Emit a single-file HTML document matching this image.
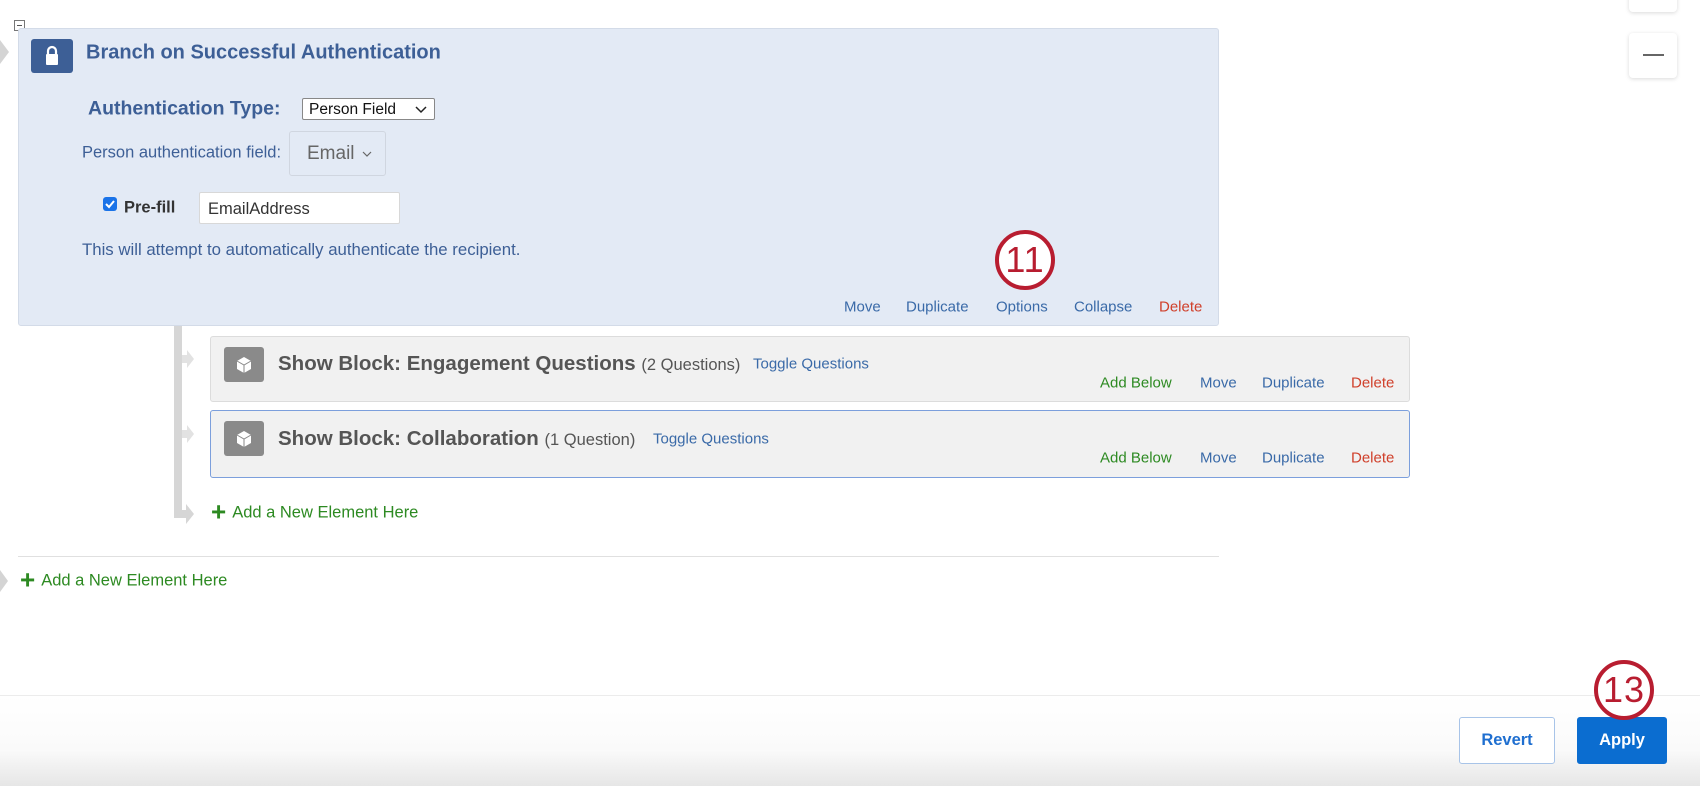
<!DOCTYPE html>
<html><head><meta charset="utf-8"><style>
*{box-sizing:border-box;margin:0;padding:0}
body{width:1700px;height:786px;background:#fff;font-family:"Liberation Sans",Arial,sans-serif;position:relative;overflow:hidden}
.a{position:absolute;white-space:nowrap}
.blue{color:#3a6aa8}
.red{color:#d0402b}
.green{color:#2d8a22}
.lk{font-size:15px;transform:translateY(-50%)}
.mid{transform:translateY(-50%)}
.blk{position:absolute;left:210px;width:1200px;background:#f1f1f1;border:1px solid #dcdcdc;border-radius:3px}
.ic{position:absolute;left:13px;top:10px;width:40px;height:35px;background:#8a8a8a;border-radius:3px}
.circ{position:absolute;width:60px;height:60px;border:4px solid #b81d30;border-radius:50%;background:#fff;color:#b81d30;font-size:36px;text-align:center;line-height:52px;letter-spacing:1px}
</style></head><body>
<div class="a" style="left:14px;top:20px;width:11px;height:11px;border:1px solid #777;background:#fff"><div style="position:absolute;left:2px;top:4px;width:5px;height:1px;background:#555"></div></div>
<div class="a" style="left:0;top:40px;width:0;height:0;border-top:12px solid transparent;border-bottom:12px solid transparent;border-left:9px solid #d4d4d4"></div>
<div class="a" style="left:18px;top:28px;width:1201px;height:298px;background:#e3eaf5;border:1px solid #d3dbe8;border-radius:3px"></div>
<div class="a" style="left:31px;top:39px;width:42px;height:34px;background:#3d5f96;border-radius:3px">
<svg width="42" height="34" viewBox="0 0 42 34"><path d="M17 16v-4a4 4 0 0 1 8 0v4" fill="none" stroke="#fff" stroke-width="2.2"/><rect x="15" y="15" width="12" height="11" rx="1" fill="#fff"/></svg></div>
<div class="a mid" style="left:86px;top:53px;font-size:20px;font-weight:bold;color:#3d5f96">Branch on Successful Authentication</div>
<div class="a mid" style="left:88px;top:109px;font-size:19.5px;font-weight:bold;color:#3d5f96">Authentication Type:</div>
<div class="a" style="left:302px;top:98px;width:133px;height:22px;background:#fff;border:1px solid #888;border-radius:2px;font-size:15.5px;color:#111;padding:2px 0 0 6px">Person Field<svg style="position:absolute;right:7px;top:7px" width="12" height="8"><path d="M1 1l5 5 5-5" fill="none" stroke="#222" stroke-width="1.5"/></svg></div>
<div class="a mid" style="left:82px;top:153px;font-size:16.5px;color:#3d5f96">Person authentication field:</div>
<div class="a" style="left:289px;top:131px;width:97px;height:45px;border:1px solid #d0d6e0;border-radius:3px;background:#e3eaf5;font-size:19px;color:#666;padding:11px 0 0 17px">Email<svg style="position:absolute;left:72px;top:19px" width="10" height="7"><path d="M1 1l4 4 4-4" fill="none" stroke="#666" stroke-width="1.2"/></svg></div>
<div class="a" style="left:103px;top:197px;width:14px;height:14px;background:#1a73e8;border-radius:3px"><svg width="14" height="14"><path d="M3 7l3 3 5-6" fill="none" stroke="#fff" stroke-width="2"/></svg></div>
<div class="a mid" style="left:124px;top:208px;font-size:16.5px;font-weight:bold;color:#333">Pre-fill</div>
<div class="a" style="left:199px;top:192px;width:201px;height:32px;background:#fff;border:1px solid #d8d8d8;border-radius:2px;font-size:16.5px;color:#333;padding:7px 0 0 8px">EmailAddress</div>
<div class="a mid" style="left:82px;top:250px;font-size:16.8px;color:#3d5f96">This will attempt to automatically authenticate the recipient.</div>
<div class="a lk blue" style="left:844px;top:307px">Move</div>
<div class="a lk blue" style="left:906px;top:307px">Duplicate</div>
<div class="a lk blue" style="left:996px;top:307px">Options</div>
<div class="a lk blue" style="left:1074px;top:307px">Collapse</div>
<div class="a lk red" style="left:1159px;top:307px">Delete</div>
<div class="circ" style="left:995px;top:230px">11</div>
<div class="a" style="left:174px;top:326px;width:8px;height:192px;background:#d6d6d6"></div>
<div class="a" style="left:174px;top:510px;width:14px;height:8px;background:#d6d6d6"></div>
<div class="a" style="left:186px;top:504px;border-top:10px solid transparent;border-bottom:10px solid transparent;border-left:8px solid #d6d6d6"></div>
<div class="a" style="left:182px;top:355px;width:6px;height:8px;background:#e2e2e2"></div>
<div class="a" style="left:187px;top:350px;border-top:9px solid transparent;border-bottom:9px solid transparent;border-left:7px solid #e2e2e2"></div>
<div class="a" style="left:182px;top:430px;width:6px;height:8px;background:#e2e2e2"></div>
<div class="a" style="left:187px;top:425px;border-top:9px solid transparent;border-bottom:9px solid transparent;border-left:7px solid #e2e2e2"></div>
<div class="blk" style="top:336px;height:66px">
<div class="ic"><svg width="40" height="35"><path d="M20 10l7 4v8l-7 4-7-4v-8z" fill="#fff"/><path d="M13 14l7 4 7-4M20 18v8" fill="none" stroke="#8a8a8a" stroke-width="1"/></svg></div>
<div class="a mid" style="left:67px;top:27px;font-size:20.5px;color:#555"><b>Show Block: Engagement Questions</b> <span style="font-size:16.5px">(2 Questions)</span></div>
<div class="a mid blue" style="left:542px;top:27px;font-size:15px">Toggle Questions</div>
<div class="a lk green" style="left:889px;top:46px">Add Below</div>
<div class="a lk blue" style="left:989px;top:46px">Move</div>
<div class="a lk blue" style="left:1051px;top:46px">Duplicate</div>
<div class="a lk red" style="left:1140px;top:46px">Delete</div>
</div>
<div class="blk" style="top:410px;height:68px;border:1.5px solid #7c9fdc">
<div class="ic"><svg width="40" height="35"><path d="M20 10l7 4v8l-7 4-7-4v-8z" fill="#fff"/><path d="M13 14l7 4 7-4M20 18v8" fill="none" stroke="#8a8a8a" stroke-width="1"/></svg></div>
<div class="a mid" style="left:67px;top:28px;font-size:20.5px;color:#555"><b>Show Block: Collaboration</b> <span style="font-size:16.5px">(1 Question)</span></div>
<div class="a mid blue" style="left:442px;top:28px;font-size:15px">Toggle Questions</div>
<div class="a lk green" style="left:889px;top:47px">Add Below</div>
<div class="a lk blue" style="left:989px;top:47px">Move</div>
<div class="a lk blue" style="left:1051px;top:47px">Duplicate</div>
<div class="a lk red" style="left:1140px;top:47px">Delete</div>
</div>
<div class="a mid green" style="left:211px;top:512px;font-size:16.5px"><span style="font-size:26px;font-weight:bold;vertical-align:-3px;margin-right:6px">+</span>Add a New Element Here</div>
<div class="a" style="left:18px;top:556px;width:1201px;height:1px;background:#e0e0e0"></div>
<div class="a" style="left:0;top:570px;border-top:11px solid transparent;border-bottom:11px solid transparent;border-left:8px solid #d4d4d4"></div>
<div class="a mid green" style="left:20px;top:580px;font-size:16.5px"><span style="font-size:26px;font-weight:bold;vertical-align:-3px;margin-right:6px">+</span>Add a New Element Here</div>
<div class="a" style="left:1629px;top:-10px;width:48px;height:22px;background:#fff;border-radius:4px;box-shadow:0 1px 4px rgba(0,0,0,.15)"><div style="position:absolute;left:23px;top:0;width:1.5px;height:9px;background:#777"></div></div>
<div class="a" style="left:1629px;top:33px;width:48px;height:45px;background:#fff;border-radius:4px;box-shadow:0 1px 4px rgba(0,0,0,.15)"><div style="position:absolute;left:14px;top:21px;width:21px;height:2px;background:#666"></div></div>
<div class="a" style="left:0;top:695px;width:1700px;height:91px;background:linear-gradient(#fff 0%,#fafafa 60%,#e6e6e6 100%);border-top:1px solid #ececec"></div>
<div class="a" style="left:1459px;top:717px;width:96px;height:47px;border:1.5px solid #a8c4e8;border-radius:3px;background:#fff;color:#1f6fd0;font-size:16.5px;font-weight:bold;text-align:center;line-height:44px">Revert</div>
<div class="a" style="left:1577px;top:717px;width:90px;height:47px;border-radius:3px;background:#0b6dd0;color:#fff;font-size:16.5px;font-weight:bold;text-align:center;line-height:47px">Apply</div>
<div class="circ" style="left:1594px;top:660px">13</div>
</body></html>
